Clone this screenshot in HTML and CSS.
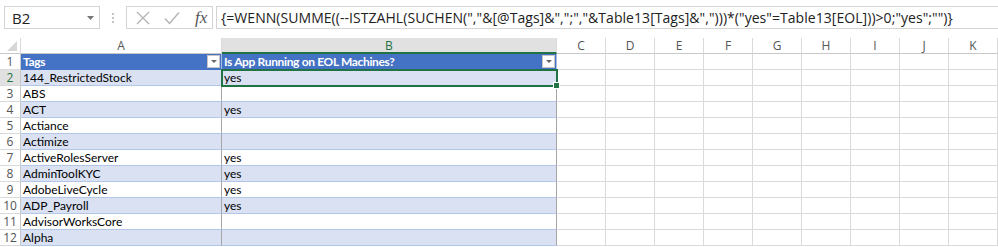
FILE: index.html
```html
<!DOCTYPE html>
<html lang="de">
  <head>
    <meta charset="utf-8" />
    <title>Table13 - EOL</title>
    <link rel="stylesheet" href="styles.css">
  </head>
  <body>
    <div class="fbar">
      <div class="namebox">
        <span>B2</span>
        <svg class="nb-arrow" width="7" height="4" viewBox="0 0 7 4"><path d="M0 0h7L3.5 4z" fill="#777"/></svg>
      </div>
      <div class="grip"><i></i><i></i><i></i></div>
      <div class="fnbox">
        <svg width="14" height="14" viewBox="0 0 14 14"><path d="M1 1l12 12M13 1L1 13" stroke="#b3b3b3" stroke-width="1.3" fill="none"/></svg>
        <svg width="16" height="14" viewBox="0 0 16 14"><path d="M1 7.5l4.5 5L15 1.5" stroke="#b3b3b3" stroke-width="1.4" fill="none"/></svg>
        <span class="fx">fx</span>
      </div>
      <div class="formula">{=WENN(SUMME((--ISTZAHL(SUCHEN(","&amp;[@Tags]&amp;",";","&amp;Table13[Tags]&amp;",")))*("yes"=Table13[EOL]))&gt;0;"yes";"")}</div>
    </div>

    <div class="sheet">
      <div class="ch corner"><svg width="10" height="10" viewBox="0 0 10 10"><path d="M10 0v10H0z" fill="#d6d6d6"/></svg></div>
      <div class="ch">A</div>
      <div class="ch ch-sel">B</div>
      <div class="ch">C</div>
      <div class="ch">D</div>
      <div class="ch">E</div>
      <div class="ch">F</div>
      <div class="ch">G</div>
      <div class="ch">H</div>
      <div class="ch">I</div>
      <div class="ch">J</div>
      <div class="ch">K</div>

      <div class="rh">1</div>
      <div class="c th">Tags<span class="dd"></span></div>
      <div class="c th">Is App Running on EOL Machines?<span class="dd"></span></div>
      <div class="c"></div><div class="c"></div><div class="c"></div><div class="c"></div><div class="c"></div><div class="c"></div><div class="c"></div><div class="c"></div><div class="c"></div>

      <div class="rh rh-sel">2</div>
      <div class="c td band">144_RestrictedStock</div>
      <div class="c td band sel">yes</div>
      <div class="c"></div><div class="c"></div><div class="c"></div><div class="c"></div><div class="c"></div><div class="c"></div><div class="c"></div><div class="c"></div><div class="c"></div>

      <div class="rh">3</div>
      <div class="c td">ABS</div>
      <div class="c td"></div>
      <div class="c"></div><div class="c"></div><div class="c"></div><div class="c"></div><div class="c"></div><div class="c"></div><div class="c"></div><div class="c"></div><div class="c"></div>

      <div class="rh">4</div>
      <div class="c td band">ACT</div>
      <div class="c td band">yes</div>
      <div class="c"></div><div class="c"></div><div class="c"></div><div class="c"></div><div class="c"></div><div class="c"></div><div class="c"></div><div class="c"></div><div class="c"></div>

      <div class="rh">5</div>
      <div class="c td">Actiance</div>
      <div class="c td"></div>
      <div class="c"></div><div class="c"></div><div class="c"></div><div class="c"></div><div class="c"></div><div class="c"></div><div class="c"></div><div class="c"></div><div class="c"></div>

      <div class="rh">6</div>
      <div class="c td band">Actimize</div>
      <div class="c td band"></div>
      <div class="c"></div><div class="c"></div><div class="c"></div><div class="c"></div><div class="c"></div><div class="c"></div><div class="c"></div><div class="c"></div><div class="c"></div>

      <div class="rh">7</div>
      <div class="c td">ActiveRolesServer</div>
      <div class="c td">yes</div>
      <div class="c"></div><div class="c"></div><div class="c"></div><div class="c"></div><div class="c"></div><div class="c"></div><div class="c"></div><div class="c"></div><div class="c"></div>

      <div class="rh">8</div>
      <div class="c td band">AdminToolKYC</div>
      <div class="c td band">yes</div>
      <div class="c"></div><div class="c"></div><div class="c"></div><div class="c"></div><div class="c"></div><div class="c"></div><div class="c"></div><div class="c"></div><div class="c"></div>

      <div class="rh">9</div>
      <div class="c td">AdobeLiveCycle</div>
      <div class="c td">yes</div>
      <div class="c"></div><div class="c"></div><div class="c"></div><div class="c"></div><div class="c"></div><div class="c"></div><div class="c"></div><div class="c"></div><div class="c"></div>

      <div class="rh">10</div>
      <div class="c td band">ADP_Payroll</div>
      <div class="c td band">yes</div>
      <div class="c"></div><div class="c"></div><div class="c"></div><div class="c"></div><div class="c"></div><div class="c"></div><div class="c"></div><div class="c"></div><div class="c"></div>

      <div class="rh">11</div>
      <div class="c td">AdvisorWorksCore</div>
      <div class="c td"></div>
      <div class="c"></div><div class="c"></div><div class="c"></div><div class="c"></div><div class="c"></div><div class="c"></div><div class="c"></div><div class="c"></div><div class="c"></div>

      <div class="rh">12</div>
      <div class="c td band">Alpha</div>
      <div class="c td band"></div>
      <div class="c"></div><div class="c"></div><div class="c"></div><div class="c"></div><div class="c"></div><div class="c"></div><div class="c"></div><div class="c"></div><div class="c"></div>
    </div>
  </body>
</html>
```

FILE: styles.css
```css
html,
body {
  margin: 0;
  padding: 0;
  background: #fff;
  font: 400 12px/1 "Lato", "Open Sans", sans-serif;
  color: #000;
  overflow: hidden;
}

/* formula bar */
.fbar {
  display: flex;
  align-items: center;
  height: 38px;
  padding: 0 0 3px 4px;
  box-sizing: border-box;
  background: #fff;
}
.namebox {
  display: flex;
  align-items: center;
  justify-content: space-between;
  width: 96px;
  height: 23px;
  box-sizing: border-box;
  padding: 0 5px 0 7px;
  border: 1px solid #d4d4d4;
  font: 15px "Open Sans", sans-serif;
  color: #222;
}
.grip {
  display: flex;
  flex-direction: column;
  gap: 2px;
  width: 26px;
  align-items: center;
}
.grip i {
  display: block;
  width: 2px;
  height: 2px;
  background: #c4c4c4;
}
.fnbox {
  display: flex;
  align-items: center;
  gap: 14px;
  width: 87px;
  height: 23px;
  box-sizing: border-box;
  padding-left: 9px;
  border: 1px solid #d4d4d4;
}
.fx {
  font: italic 17px "Liberation Serif", serif;
  color: #555;
  margin-left: 1px;
}
.formula {
  flex: 1;
  height: 23px;
  margin-left: 3px;
  box-sizing: border-box;
  padding: 2px 0 0 4px;
  border: 1px solid #d4d4d4;
  border-right: 0;
  font: 14px/18px "Open Sans", sans-serif;
  letter-spacing: 0.05px;
  color: #222;
  white-space: nowrap;
  overflow: hidden;
}

/* grid */
.sheet {
  display: grid;
  grid-template-columns: 21px 201px 335px repeat(9, 49px);
  grid-auto-rows: 16px;
}
.ch {
  display: flex;
  align-items: center;
  justify-content: center;
  border-right: 1px solid #dadada;
  border-bottom: 1px solid #c8c8c8;
  font: 12px "Open Sans", sans-serif;
  color: #555;
}
.corner {
  justify-content: flex-end;
  align-items: flex-end;
  padding: 0 3px 2px 0;
}
.ch-sel {
  background: #e1e1e1;
  color: #217346;
  border-bottom: 2px solid #217346;
}
.rh {
  display: flex;
  align-items: center;
  justify-content: center;
  border-right: 1px solid #c8c8c8;
  border-bottom: 1px solid #dadada;
  font: 12px "Open Sans", sans-serif;
  color: #555;
}
.rh-sel {
  background: #e1e1e1;
  color: #217346;
}
.c {
  display: flex;
  align-items: center;
  padding-left: 2px;
  border-right: 1px solid #dadada;
  border-bottom: 1px solid #dadada;
  white-space: nowrap;
  overflow: hidden;
}
.th {
  background: #4472c4;
  color: #fff;
  font-weight: 700;
  letter-spacing: -0.35px;
  border-right: 1px solid #a9bde0;
  border-bottom-color: #4472c4;
}
.dd {
  margin-left: auto;
  margin-right: 1px;
  width: 13px;
  height: 13px;
  box-sizing: border-box;
  border: 1px solid #c6c6c6;
  background: #fff;
  position: relative;
}
.dd::after {
  content: "";
  position: absolute;
  left: 3px;
  top: 4px;
  border: 3px solid transparent;
  border-top: 3px solid #666;
}
.td {
  border-bottom-color: #b4c6e7;
  border-right-color: #a6a6a6;
}
.band {
  background: #d9e1f2;
}
.sel {
  position: relative;
  overflow: visible;
  outline: 2px solid #217346;
  outline-offset: -1px;
}
.sel::after {
  content: "";
  position: absolute;
  right: -4px;
  bottom: -4px;
  width: 5px;
  height: 5px;
  background: #217346;
  border: 1px solid #fff;
}
```
